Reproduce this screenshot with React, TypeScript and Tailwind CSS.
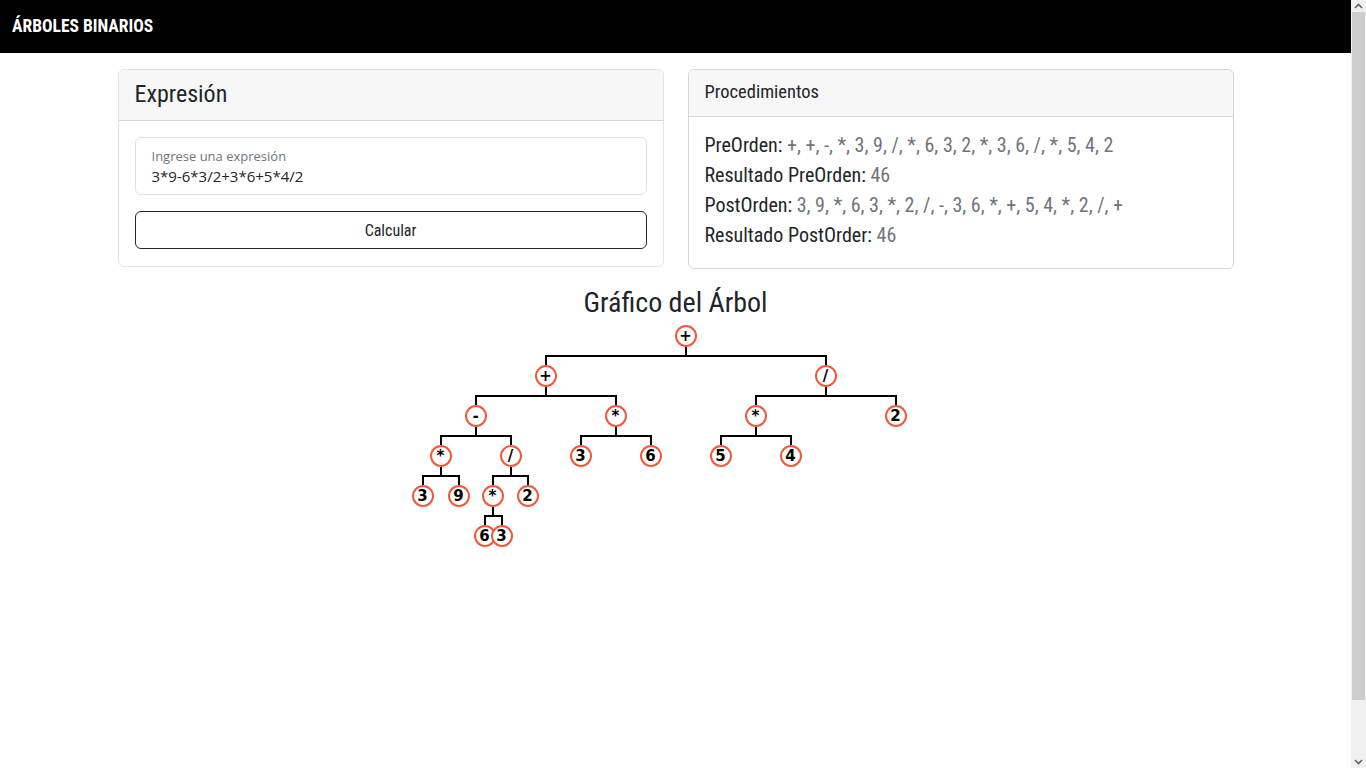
import React from "react";

type N = { id: string; label: string; x: number; y: number; parent?: string };

const OX = 376;
const OY = 321;

const nodes: N[] = [
  { id: "r", label: "+", x: 686, y: 337 },
  { id: "a", label: "+", x: 546, y: 377, parent: "r" },
  { id: "b", label: "/", x: 826, y: 377, parent: "r" },
  { id: "a1", label: "-", x: 476, y: 417, parent: "a" },
  { id: "a2", label: "*", x: 616, y: 417, parent: "a" },
  { id: "b1", label: "*", x: 756, y: 417, parent: "b" },
  { id: "b2", label: "2", x: 896, y: 417, parent: "b" },
  { id: "a11", label: "*", x: 441, y: 457, parent: "a1" },
  { id: "a12", label: "/", x: 511, y: 457, parent: "a1" },
  { id: "a21", label: "3", x: 581, y: 457, parent: "a2" },
  { id: "a22", label: "6", x: 651, y: 457, parent: "a2" },
  { id: "b11", label: "5", x: 721, y: 457, parent: "b1" },
  { id: "b12", label: "4", x: 791, y: 457, parent: "b1" },
  { id: "a111", label: "3", x: 423, y: 497, parent: "a11" },
  { id: "a112", label: "9", x: 459, y: 497, parent: "a11" },
  { id: "a121", label: "*", x: 493, y: 497, parent: "a12" },
  { id: "a122", label: "2", x: 528, y: 497, parent: "a12" },
  { id: "a1211", label: "6", x: 485, y: 537, parent: "a121" },
  { id: "a1212", label: "3", x: 502, y: 537, parent: "a121" },
];

const R = 11;

function TreeLines() {
  const parents = nodes.filter((p) => nodes.some((c) => c.parent === p.id));
  return (
    <svg className="absolute inset-0" width={600} height={240}>
      {parents.map((p) => {
        const kids = nodes.filter((c) => c.parent === p.id);
        const px = p.x - OX;
        const py = p.y - OY;
        const barY = py + 20;
        const xs = kids.map((k) => k.x - OX);
        return (
          <g key={p.id} stroke="#000" strokeWidth={2} fill="none">
            <line x1={px} y1={py + R} x2={px} y2={barY} />
            <line x1={Math.min(...xs) - 1} y1={barY} x2={Math.max(...xs) + 1} y2={barY} />
            {kids.map((k) => (
              <line key={k.id} x1={k.x - OX} y1={barY} x2={k.x - OX} y2={k.y - OY - R} />
            ))}
          </g>
        );
      })}
    </svg>
  );
}

function Scrollbar() {
  return (
    <div className="w-[15px] h-[768px] bg-[#f0f0f0] flex flex-col">
      <div className="h-[12px] flex items-center justify-center">
        <svg width="9" height="6" viewBox="0 0 9 6">
          <path d="M1 5 L4.5 1.5 L8 5" stroke="#606060" strokeWidth="1.6" fill="none" />
        </svg>
      </div>
      <div className="h-[688px] mx-[1px] bg-[#cdcdcd]" />
      <div className="flex-1" />
      <div className="h-[12px] flex items-center justify-center">
        <svg width="9" height="6" viewBox="0 0 9 6">
          <path d="M1 1 L4.5 4.5 L8 1" stroke="#606060" strokeWidth="1.6" fill="none" />
        </svg>
      </div>
    </div>
  );
}

const narrow = { fontFamily: '"Roboto Condensed", "Liberation Sans Narrow", "Liberation Sans", sans-serif' };

export default function App() {
  return (
    <div className="h-[768px] flex overflow-hidden bg-white" style={narrow}>
      <div className="flex-1 min-w-0">
        <nav className="h-[53px] bg-black flex items-center px-3">
          <span className="text-white font-bold text-[17.5px]">ÁRBOLES BINARIOS</span>
        </nav>

        <div className="w-[1116px] mx-auto mt-4 flex gap-6 items-start">
          <div className="w-[546px] border border-[#e3e3e3] rounded-md bg-white">
            <div className="h-[51px] bg-[#f7f7f7] border-b border-[#d9d9d9] rounded-t-md flex items-center px-4 pb-[3px]">
              <span className="text-[24px] text-[#212529]">Expresión</span>
            </div>
            <div className="p-4 pb-[17px]">
              <div
                className="h-[58px] border border-[#dee2e6] rounded-md px-4 pt-[9px]"
                style={{ fontFamily: '"Open Sans", "Noto Sans", sans-serif' }}
              >
                <div className="text-[13px] leading-[18px] text-[#6c757d]">Ingrese una expresión</div>
                <div className="text-[15px] leading-[22px] text-[#212529]">3*9-6*3/2+3*6+5*4/2</div>
              </div>
              <button className="mt-4 w-full h-[38px] border border-[#212529] rounded-md text-[16px] leading-[20px] pt-[2px] text-[#212529] bg-white">
                Calcular
              </button>
            </div>
          </div>

          <div className="w-[546px] border border-[#d6d6d6] rounded-md bg-white">
            <div className="h-[47px] bg-[#f7f7f7] border-b border-[#d9d9d9] rounded-t-md flex items-center px-4 pb-[1px]">
              <span className="text-[18.5px] text-[#212529]">Procedimientos</span>
            </div>
            <div className="px-4 pt-[13px] pb-[18px] text-[20px] leading-[30px]">
              <div className="text-[#212529]">
                PreOrden: <span className="text-[#6c757d]">+, +, -, *, 3, 9, /, *, 6, 3, 2, *, 3, 6, /, *, 5, 4, 2</span>
              </div>
              <div className="text-[#212529]">
                Resultado PreOrden: <span className="text-[#6c757d]">46</span>
              </div>
              <div className="text-[#212529]">
                PostOrden: <span className="text-[#6c757d]">3, 9, *, 6, 3, *, 2, /, -, 3, 6, *, +, 5, 4, *, 2, /, +</span>
              </div>
              <div className="text-[#212529]">
                Resultado PostOrder: <span className="text-[#6c757d]">46</span>
              </div>
            </div>
          </div>
        </div>

        <h2 className="mt-[16px] text-center text-[28px] leading-[35px] text-[#212529]">Gráfico del Árbol</h2>

        <div className="relative w-[600px] h-[240px] mx-auto">
          <TreeLines />
          {nodes.map((n) => (
            <div
              key={n.id}
              className="absolute w-[22px] h-[22px] rounded-full border-2 border-[#f05a3c] bg-white flex items-center justify-center text-[15px] font-bold text-black leading-none"
              style={{ left: n.x - OX - R, top: n.y - OY - R, fontFamily: '"DejaVu Sans", Verdana, sans-serif' }}
            >
              {n.label}
            </div>
          ))}
        </div>
      </div>
      <Scrollbar />
    </div>
  );
}
